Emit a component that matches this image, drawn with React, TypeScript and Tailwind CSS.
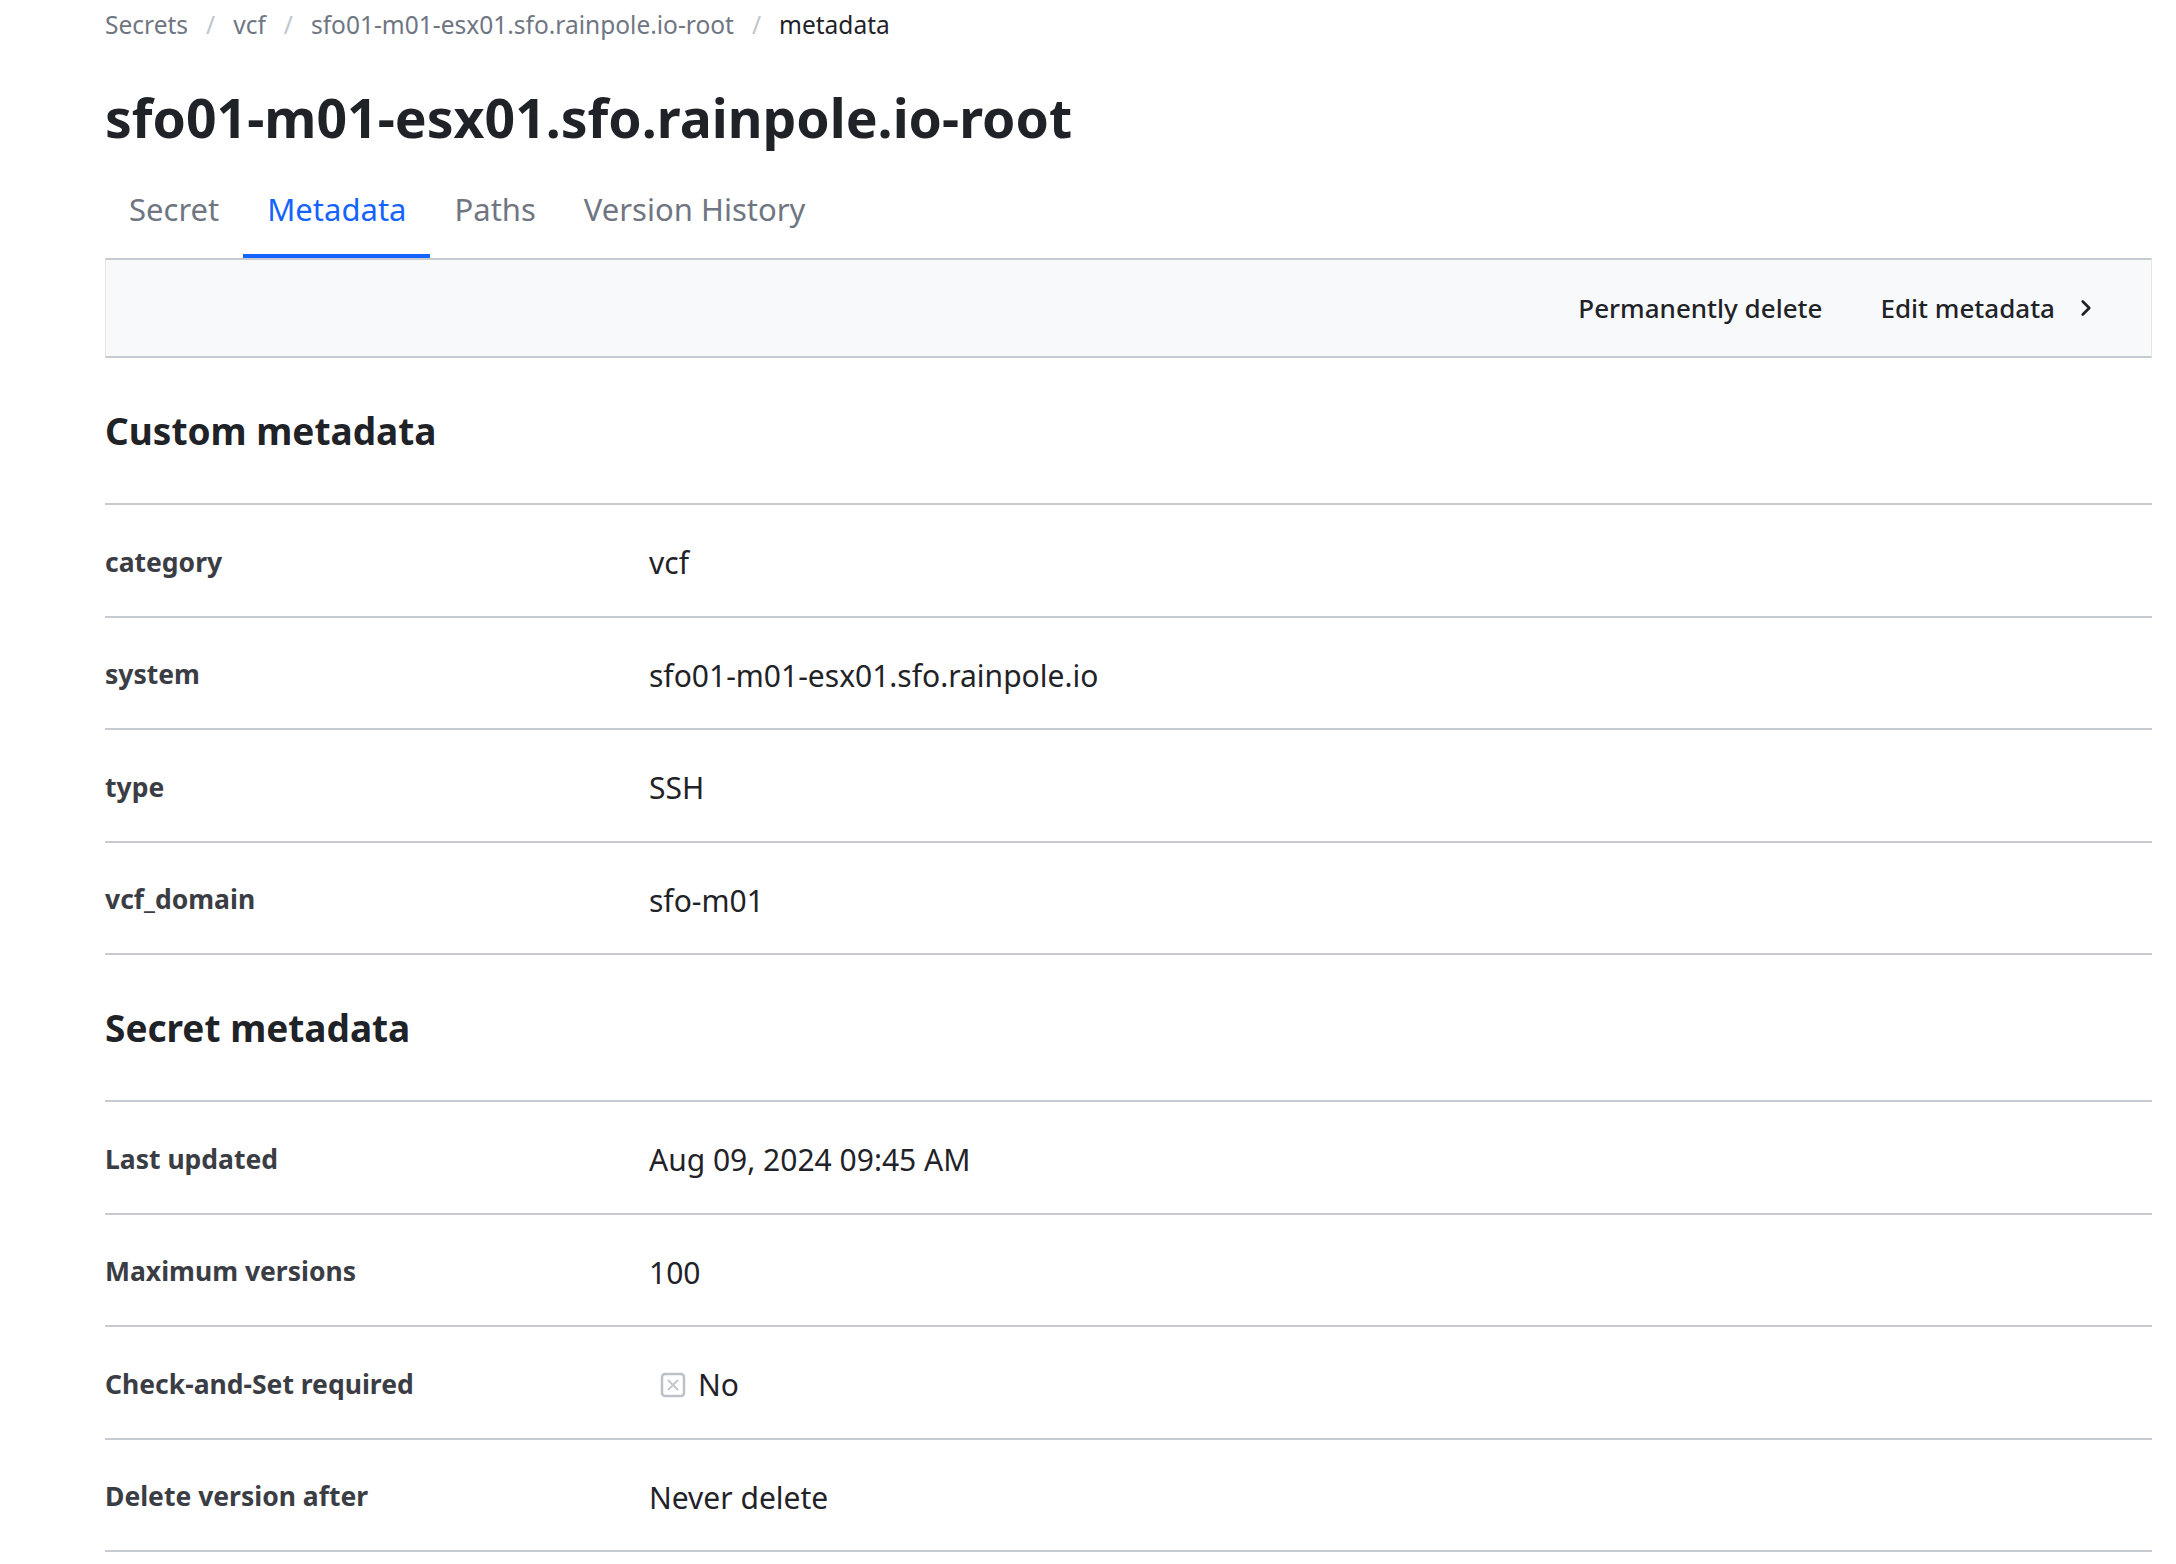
import { ChevronRight } from 'lucide-react';

const customRows = [
  { label: 'category', value: 'vcf' },
  { label: 'system', value: 'sfo01-m01-esx01.sfo.rainpole.io' },
  { label: 'type', value: 'SSH' },
  { label: 'vcf_domain', value: 'sfo-m01' },
];

function Crumb({ children, last }: { children: string; last?: boolean }) {
  return (
    <span className={last ? 'text-[#1f2328]' : 'text-[#6f7682]'}>{children}</span>
  );
}

function Sep() {
  return <span className="mx-[18px] text-[#c0c5cd]">/</span>;
}

function SectionHeading({ title }: { title: string }) {
  return (
    <div className="flex h-[147px] items-center border-b-2 border-[#c7cad1]">
      <h2 className="text-[37px] font-bold leading-[48px] text-[#1f2328]">{title}</h2>
    </div>
  );
}

function Row({ label, children }: { label: string; children: React.ReactNode }) {
  return (
    <div className="grid h-[112.5px] grid-cols-[544px_1fr] items-center border-b-2 border-[#c7cad1] pt-[5px]">
      <div className="text-[26.5px] font-bold text-[#3b3d45]">{label}</div>
      <div className="text-[30px] text-[#1f2328]">{children}</div>
    </div>
  );
}

function CrossBox() {
  return (
    <svg width="26" height="26" viewBox="0 0 26 26" className="ml-[11px] mr-[12px]">
      <rect x="2" y="2" width="22" height="22" rx="3" fill="none" stroke="#bcc1c9" strokeWidth="2.5" />
      <path d="M8.5 8.5 L17.5 17.5 M17.5 8.5 L8.5 17.5" stroke="#c4c8cf" strokeWidth="2" strokeLinecap="round" />
    </svg>
  );
}

export default function App() {
  return (
    <div className="min-h-screen bg-white pl-[105px] pr-[24px] font-['Noto_Sans',sans-serif]">
      <nav className="flex h-[43px] items-end pb-[2px] text-[24.5px] leading-[32px]">
        <Crumb>Secrets</Crumb>
        <Sep />
        <Crumb>vcf</Crumb>
        <Sep />
        <Crumb>sfo01-m01-esx01.sfo.rainpole.io-root</Crumb>
        <Sep />
        <Crumb last>metadata</Crumb>
      </nav>

      <h1 className="mt-[43px] text-[53.5px] font-bold leading-[64px] text-[#1f2328]">
        sfo01-m01-esx01.sfo.rainpole.io-root
      </h1>

      <div className="mt-[28px] flex">
        {['Secret', 'Metadata', 'Paths', 'Version History'].map((t) => (
          <div
            key={t}
            className={`border-b-4 px-6 pt-[11px] pb-[25px] text-[31px] leading-[40px] ${
              t === 'Metadata'
                ? 'border-[#1563ff] text-[#1563ff]'
                : 'border-transparent text-[#6f7682]'
            }`}
          >
            {t}
          </div>
        ))}
      </div>

      <div className="flex h-[100px] items-center justify-end gap-[58px] border-x border-y-2 border-x-[#e4e6ea] border-y-[#c7cad1] bg-[#f8f9fb] pr-[52px]">
        <button className="text-[26px] font-medium text-[#1f2328]">Permanently delete</button>
        <button className="flex items-center gap-[18px] text-[26px] font-medium text-[#1f2328]">
          Edit metadata
          <ChevronRight size={26} strokeWidth={2.5} />
        </button>
      </div>

      <SectionHeading title="Custom metadata" />
      {customRows.map((r) => (
        <Row key={r.label} label={r.label}>
          {r.value}
        </Row>
      ))}

      <SectionHeading title="Secret metadata" />
      <Row label="Last updated">Aug 09, 2024 09:45 AM</Row>
      <Row label="Maximum versions">100</Row>
      <Row label="Check-and-Set required">
        <span className="flex items-center">
          <CrossBox />
          No
        </span>
      </Row>
      <Row label="Delete version after">Never delete</Row>
    </div>
  );
}
